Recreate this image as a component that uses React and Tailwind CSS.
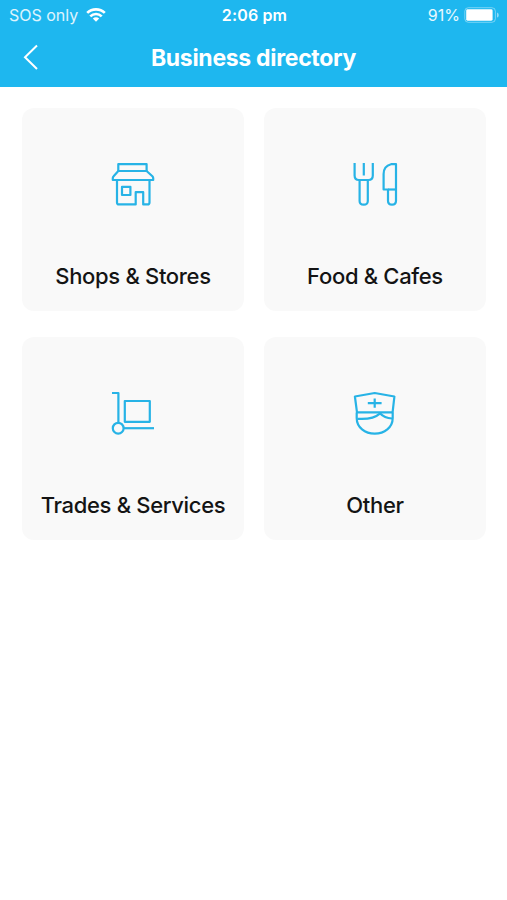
function WifiIcon() {
  return (
    <svg width="20" height="14" viewBox="0 0 20 14" fill="none" stroke="white" strokeWidth="2.7">
      <path d="M1.2 4.9C6 .2 14 .2 18.8 4.9" />
      <path d="M4.3 8.4C7.5 5.2 12.5 5.2 15.7 8.4" />
      <path d="M10 13.8 6.8 10.5C8.6 8.8 11.4 8.8 13.2 10.5Z" fill="white" stroke="none" />
    </svg>
  );
}

function BatteryIcon() {
  return (
    <svg width="36" height="16" viewBox="0 0 36 16" fill="none">
      <rect x="0.8" y="0.7" width="30.6" height="14.6" rx="3.6" stroke="white" strokeOpacity="0.4" />
      <rect x="2.2" y="2.3" width="26.4" height="11.4" rx="1.4" fill="white" />
      <path d="M33 5.4C35.3 6.3 35.3 9.7 33 10.6Z" fill="white" fillOpacity="0.5" />
    </svg>
  );
}

function ShopIcon() {
  return (
    <>
      <path d="M18.3 21V14.2H46.6V21" />
      <path d="M18.3 21H46.6L52.4 26.2Q53.2 27 53.2 28V30H12.8V28Q12.8 27 13.6 26.2Z" />
      <path d="M17 30V52.4Q17 54.4 19 54.4H35.7V42.2H43.2V54.4H47.5Q49.5 54.4 49.5 52.4V30" />
      <rect x="22" y="36.8" width="8.4" height="8.2" />
    </>
  );
}

function FoodIcon() {
  return (
    <>
      <path d="M14.6 13V25.5Q14.6 30 19 30H28.4Q32.8 30 32.8 25.5V13" />
      <path d="M23.8 13V25.5" />
      <path d="M19.6 30V51Q19.6 54.7 23.7 54.7T27.8 51V30" />
      <path d="M56 14.2V50.8Q56 54.7 52 54.7T48 50.8V39.5H43.6V24Q43.6 16 51 14.2Z" />
      <path d="M48 39.5H56" />
    </>
  );
}

function TradesIcon() {
  return (
    <>
      <path d="M12 13H18.4V42.5" />
      <rect x="24.8" y="21" width="25" height="20.8" />
      <circle cx="18.2" cy="48.2" r="5.4" />
      <path d="M23.6 48.2H54" />
    </>
  );
}

function OtherIcon() {
  return (
    <>
      <path d="M17 32.4 14.9 16.5 34.7 13 54.4 16.5 52.6 32.4Z" />
      <path d="M16.7 32.4V38C16.7 47.5 25 53.7 34.7 53.7S52.7 47.5 52.7 38V32.4" />
      <path d="M17.3 38.8C28 39.6 35 38 40.2 33.4C43.4 36.9 47 38.1 52 38.5" />
      <path d="M34.7 18.4V27.8M27.8 23.1H41.6" />
    </>
  );
}

const categories = [
  { label: "Shops & Stores", Icon: ShopIcon, viewBox: "8 10 50 50" },
  { label: "Food & Cafes", Icon: FoodIcon, viewBox: "10 10 50 50" },
  { label: "Trades & Services", Icon: TradesIcon, viewBox: "8 9 50 50" },
  { label: "Other", Icon: OtherIcon, viewBox: "10 9 50 50" },
];

export default function App() {
  return (
    <div className="min-h-screen w-full bg-white font-['Inter','Liberation_Sans',sans-serif]">
      <header className="h-[87px] bg-[#1eb7ef] text-white">
        {/* Status bar */}
        <div className="grid h-[30px] grid-cols-3 items-center pl-[9px] pr-[7px] text-[16px]">
          <div className="flex items-center gap-2">
            <span className="whitespace-nowrap text-white/85">SOS only</span>
            <WifiIcon />
          </div>
          <span className="text-center font-semibold tracking-[0.15px]">2:06 pm</span>
          <div className="flex items-center justify-end gap-1">
            <span className="text-white/90">91%</span>
            <BatteryIcon />
          </div>
        </div>

        <div className="grid h-[56px] grid-cols-[60px_1fr_60px] items-center">
          <button className="pb-[3px] pl-[23px]" aria-label="Back">
            <svg width="16" height="26" viewBox="0 0 16 26" fill="none" stroke="white" strokeWidth="2">
              <path d="M14 1.5 2 13.2 14 25" />
            </svg>
          </button>
          <h1 className="text-center text-[23px] font-bold tracking-[-0.3px]">Business directory</h1>
        </div>
      </header>

      <main className="grid grid-cols-2 gap-x-5 gap-y-[26px] pl-[22px] pr-[21px] pt-[21px]">
        {categories.map(({ label, Icon, viewBox }) => (
          <button key={label} className="flex h-[203px] flex-col items-center rounded-xl bg-[#f9f9f9] pt-[52px]">
            <svg
              className="h-[50px] w-[50px]"
              viewBox={viewBox}
              fill="none"
              stroke="#27b3e6"
              strokeWidth="2.2"
              strokeLinejoin="round"
            >
              <Icon />
            </svg>
            <span className="mt-[50px] whitespace-nowrap text-[22px] font-[550] leading-8 tracking-[-0.32px] text-[#141414]">
              {label}
            </span>
          </button>
        ))}
      </main>
    </div>
  );
}
